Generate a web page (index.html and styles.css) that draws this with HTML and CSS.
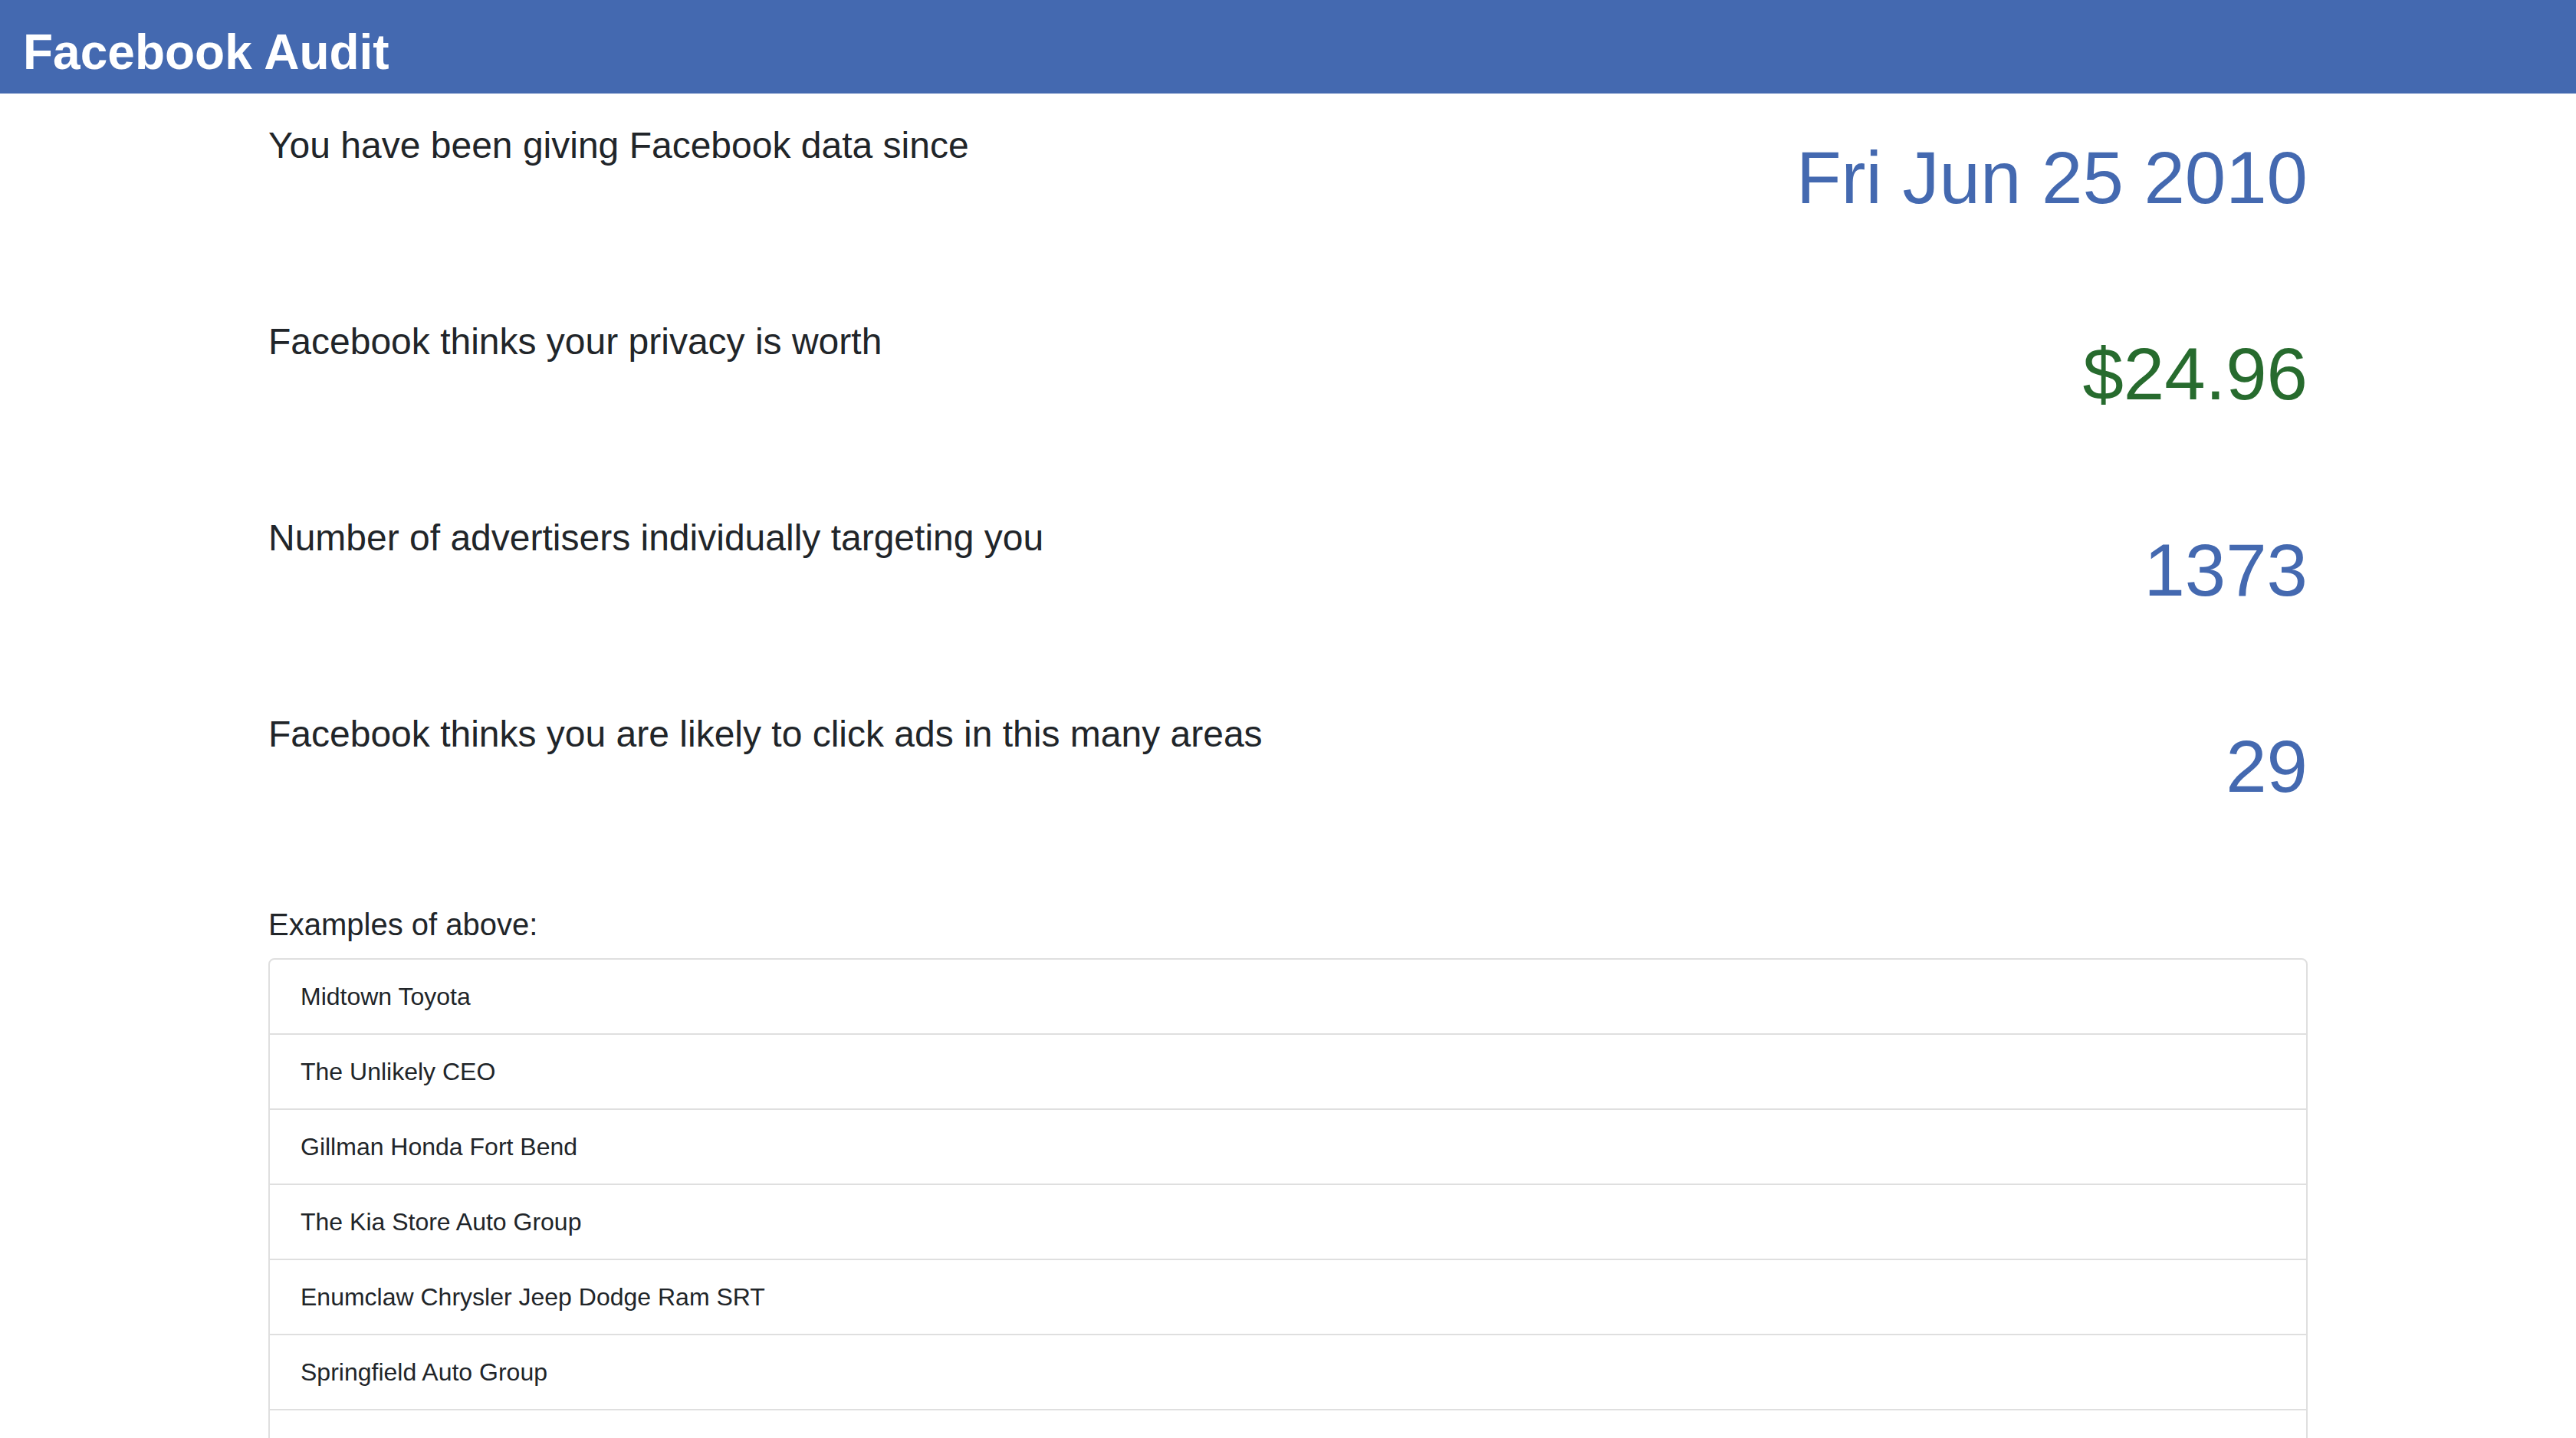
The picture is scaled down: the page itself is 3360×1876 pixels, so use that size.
FILE: index.html
```html
<!DOCTYPE html>
<html lang="en">
<head>
<meta charset="utf-8">
<title>Facebook Audit</title>
<link rel="stylesheet" href="styles.css">
</head>
<body>
<header class="topbar">
  <h1 class="brand">Facebook Audit</h1>
</header>
<main class="container">
  <section class="stat">
    <h4 class="stat-label">You have been giving Facebook data since</h4>
    <div class="stat-value">Fri Jun 25 2010</div>
  </section>
  <section class="stat">
    <h4 class="stat-label">Facebook thinks your privacy is worth</h4>
    <div class="stat-value money">$24.96</div>
  </section>
  <section class="stat">
    <h4 class="stat-label">Number of advertisers individually targeting you</h4>
    <div class="stat-value">1373</div>
  </section>
  <section class="stat">
    <h4 class="stat-label">Facebook thinks you are likely to click ads in this many areas</h4>
    <div class="stat-value">29</div>
  </section>
  <h5 class="examples-title">Examples of above:</h5>
  <ul class="list-group">
    <li class="list-item">Midtown Toyota</li>
    <li class="list-item">The Unlikely CEO</li>
    <li class="list-item">Gillman Honda Fort Bend</li>
    <li class="list-item">The Kia Store Auto Group</li>
    <li class="list-item">Enumclaw Chrysler Jeep Dodge Ram SRT</li>
    <li class="list-item">Springfield Auto Group</li>
    <li class="list-item">Wilkins Concord</li>
  </ul>
</main>
</body>
</html>
```

FILE: styles.css
```css
html, body {
  margin: 0;
  padding: 0;
  background: #ffffff;
}

body {
  font-family: "Liberation Sans", Arial, Helvetica, sans-serif;
  color: #212529;
}

.topbar {
  background: #4469b0;
  height: 122px;
  box-sizing: border-box;
  padding: 30px 30px 0;
}

.brand {
  margin: 0;
  font-size: 64px;
  line-height: 77px;
  font-weight: 700;
  color: #ffffff;
}

.container {
  width: 2660px;
  margin: 0 auto;
  padding-top: 32px;
}

.stat {
  display: flex;
  justify-content: space-between;
  align-items: flex-start;
  margin-bottom: 121px;
}

.stat-label {
  margin: 0;
  font-size: 48px;
  line-height: 72px;
  font-weight: 400;
}

.stat-value {
  margin-top: 20px;
  font-size: 96px;
  line-height: 115px;
  color: #4469b0;
  text-align: right;
}

.stat-value.money {
  color: #276b2e;
}

.examples-title {
  margin: 0 0 15px;
  font-size: 40px;
  line-height: 57px;
  font-weight: 400;
}

.list-group {
  list-style: none;
  margin: 0;
  padding: 0;
  border: 2px solid #dfdfdf;
  border-radius: 8px;
}

.list-item {
  padding: 24px 40px;
  font-size: 32px;
  line-height: 48px;
  border-top: 2px solid #dfdfdf;
}

.list-item:first-child {
  border-top: none;
}
```
